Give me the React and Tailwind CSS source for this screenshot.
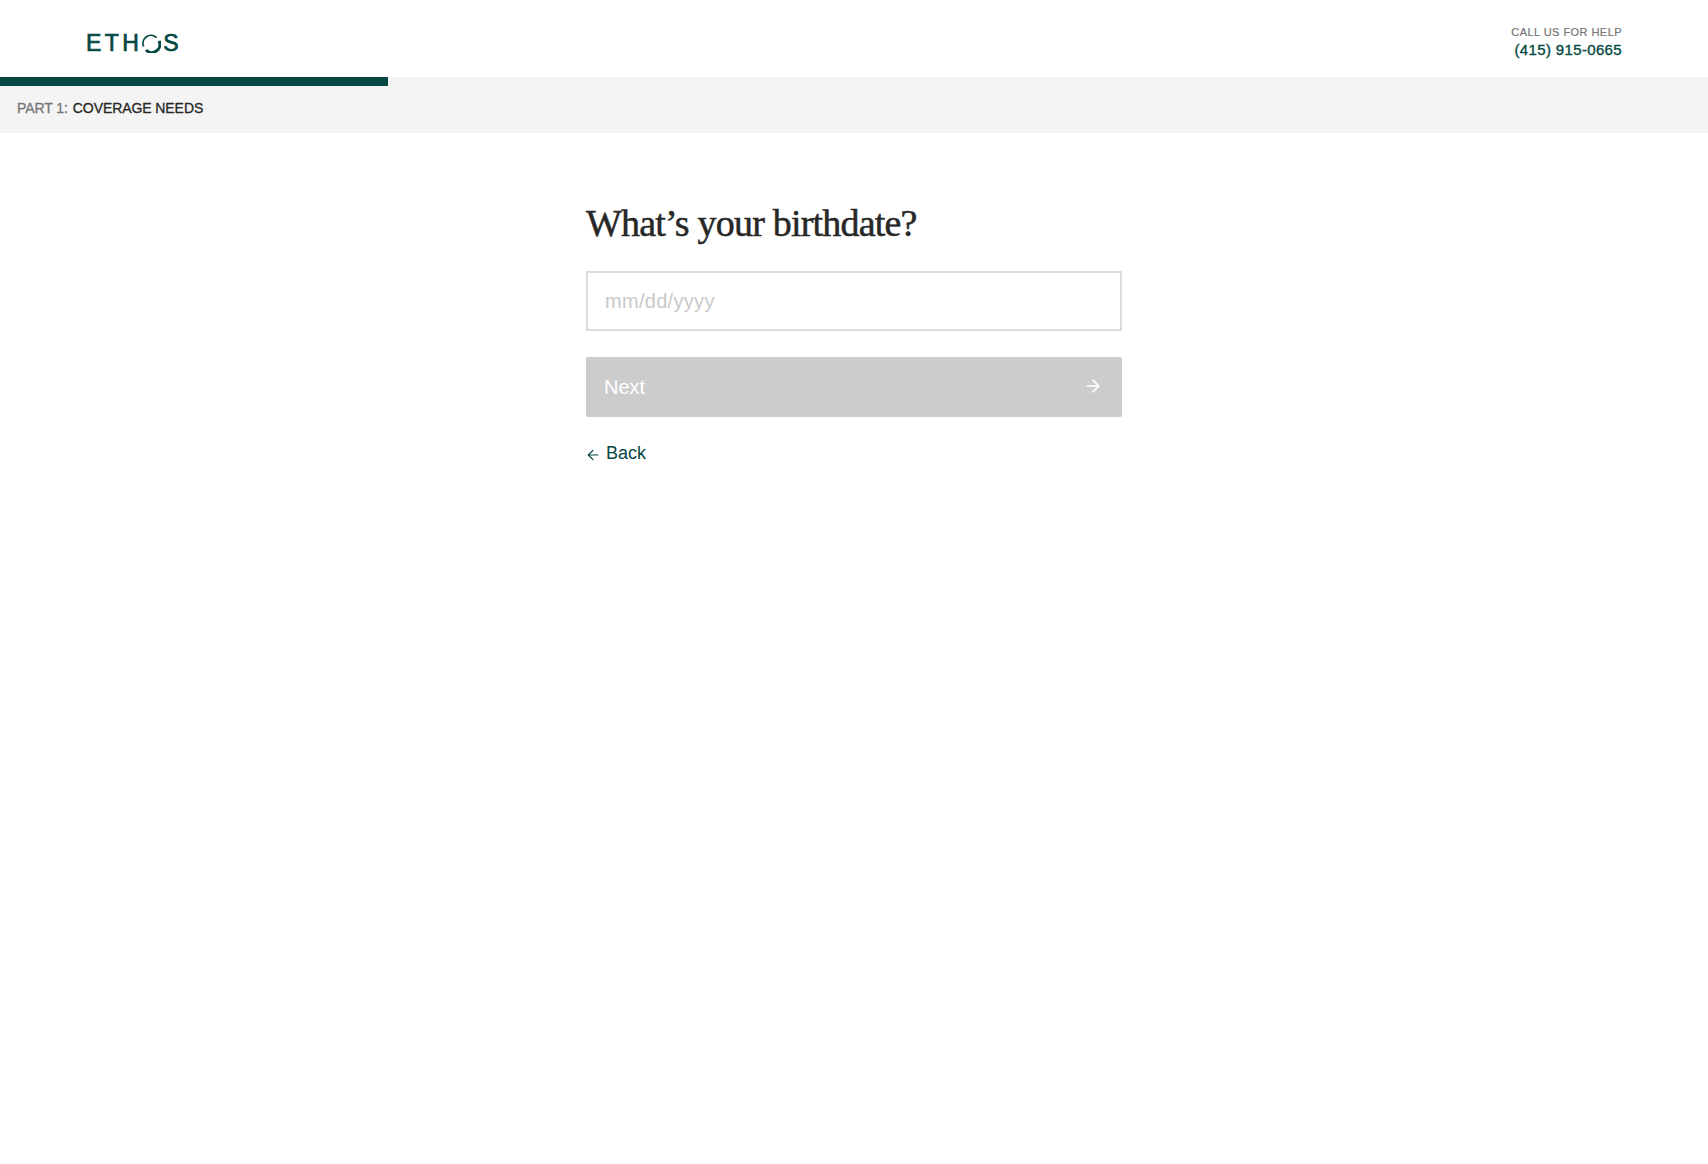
import { ArrowLeft, ArrowRight } from 'lucide-react'

function Logo() {
  return (
    <div className="mt-[9px] flex items-center font-['Liberation_Sans',sans-serif] text-[23px] leading-none text-[#054742] tracking-[3.4px] [-webkit-text-stroke:0.7px_#054742]">
      <span>ETH</span>
      <svg width="20" height="19" viewBox="0 0 20 19" className="mr-[2px] -ml-[1px]" fill="none" stroke="#054742">
        <path d="M2.6 12.5 A8 8 0 0 1 15.5 3.6" strokeWidth="1.8" />
        <path d="M18 7 A8 8 0 0 1 5 16" strokeWidth="3" />
      </svg>
      <span>S</span>
    </div>
  )
}

export default function App() {
  return (
    <div className="min-h-[1164px] bg-white font-['Liberation_Sans',sans-serif]">
      <header className="flex h-[77px] items-center justify-between pl-[86px] pr-[86px]">
        <Logo />
        <div className="pt-[7px] text-right">
          <p className="text-[11px] leading-[13px] tracking-[0.45px] text-[#757575] [-webkit-text-stroke:0.2px_#757575]">CALL US FOR HELP</p>
          <p className="mt-[2px] text-[15px] leading-[18px] tracking-[0.35px] text-[#054742] [-webkit-text-stroke:0.35px_#054742]">(415) 915-0665</p>
        </div>
      </header>

      <div className="h-[9px] bg-[#f4f4f4]">
        <div className="h-full w-[388px] bg-[#054742]" />
      </div>
      <div className="flex h-[47px] items-center bg-[#f4f4f4] px-[17px] pb-[2px] text-[14px] tracking-[-0.08px]">
        <span className="text-[#757575] [-webkit-text-stroke:0.3px_#757575]">PART 1:</span>
        <span className="ml-[5px] text-[#272727] [-webkit-text-stroke:0.3px_#272727]">COVERAGE NEEDS</span>
      </div>

      <main className="mx-auto w-[536px] pt-[67px]">
        <h1 className="font-['Liberation_Serif',serif] text-[38px] leading-[46px] tracking-[-0.8px] font-normal text-[#272727] [-webkit-text-stroke:0.5px_#272727]">
          What’s your birthdate?
        </h1>
        <input
          placeholder="mm/dd/yyyy"
          className="mt-[25px] block h-[60px] w-full border-2 border-[#dcdcdc] bg-white px-[17px] text-[20px] tracking-[0.3px] text-[#272727] outline-none placeholder:text-[#c9c9c9]"
        />
        <button className="mt-[26px] flex h-[60px] w-full items-center justify-between rounded-[2px] bg-[#cccccc] pl-[18px] pr-[19px] text-[20px] text-white">
          <span>Next</span>
          <ArrowRight size={20} strokeWidth={2} className="-mt-[2px]" />
        </button>
        <a className="mt-[23px] flex items-center text-[18px] leading-[27px] text-[#054742]">
          <ArrowLeft size={16} strokeWidth={1.75} className="mt-[3px] mr-[5px] -ml-[1px]" />
          Back
        </a>
      </main>
    </div>
  )
}
